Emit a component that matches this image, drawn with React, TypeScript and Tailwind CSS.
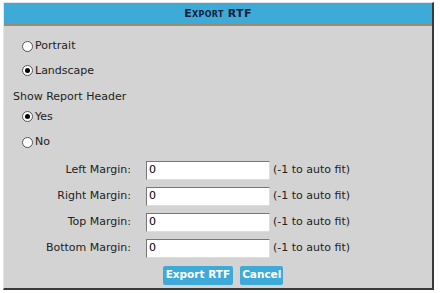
import React from 'react';

const Radio: React.FC<{ checked?: boolean; label: string }> = ({ checked, label }) => (
  <label className="flex items-center gap-[2px] text-[11px] text-[#222]">
    <span className="w-[11px] h-[11px] rounded-full bg-white border border-[#555] flex items-center justify-center">
      {checked && <span className="w-[5px] h-[5px] rounded-full bg-black" />}
    </span>
    {label}
  </label>
);

const margins = ['Left Margin:', 'Right Margin:', 'Top Margin:', 'Bottom Margin:'];

const App: React.FC = () => {
  return (
    <div className="w-[440px] h-[293px] bg-white pt-[2px] pl-[3px]" style={{ fontFamily: '"DejaVu Sans", Verdana, sans-serif' }}>
      <div className="w-[431px] h-[288px] bg-[#d3d3d3] border-t border-l border-[#e6e6e6] border-r-2 border-b-2 border-r-[#3a3a3a] border-b-[#3a3a3a] flex flex-col">
        {/* Header */}
        <div className="h-[23px] shrink-0 bg-[#3eaad8] border-b-2 border-[#9b8a6c] flex items-center justify-center pt-[1px]">
          <span className="text-[11px] font-bold text-[#16213a] [font-variant:small-caps] tracking-[0.3px]">Export RTF</span>
        </div>

        <div className="flex flex-col pl-[18px] pt-[12px]">
          <Radio label="Portrait" />
          <div className="mt-[8px]"><Radio checked label="Landscape" /></div>
        </div>
        <div className="pl-[9px] mt-[10px] text-[11px] text-[#222]">Show Report Header</div>
        <div className="flex flex-col pl-[18px] mt-[3px]">
          <Radio checked label="Yes" />
          <div className="mt-[9px]"><Radio label="No" /></div>
        </div>

        {/* Margins */}
        <div className="flex flex-col gap-[7px] mt-[10px]">
          {margins.map((m) => (
            <div key={m} className="flex items-center">
              <span className="w-[127px] text-right text-[11px] text-[#222]">{m}</span>
              <div className="ml-[15px] w-[124px] h-[19px] bg-white border border-[#777] border-r-[#ddd] border-b-[#ddd] flex items-center pl-[2px] text-[11px] text-black">
                0
              </div>
              <span className="ml-[3px] text-[11px] text-[#222]">(-1 to auto fit)</span>
            </div>
          ))}
        </div>

        {/* Buttons */}
        <div className="flex justify-center gap-[7px] mt-[8px] pl-[10px]">
          <button className="h-[19px] px-[3px] bg-[#3eaad8] text-white text-[10.5px] font-bold rounded-[2px]">Export RTF</button>
          <button className="h-[19px] px-[2px] bg-[#3eaad8] text-white text-[10.5px] font-bold rounded-[2px]">Cancel</button>
        </div>
      </div>
    </div>
  );
};

export default App;
